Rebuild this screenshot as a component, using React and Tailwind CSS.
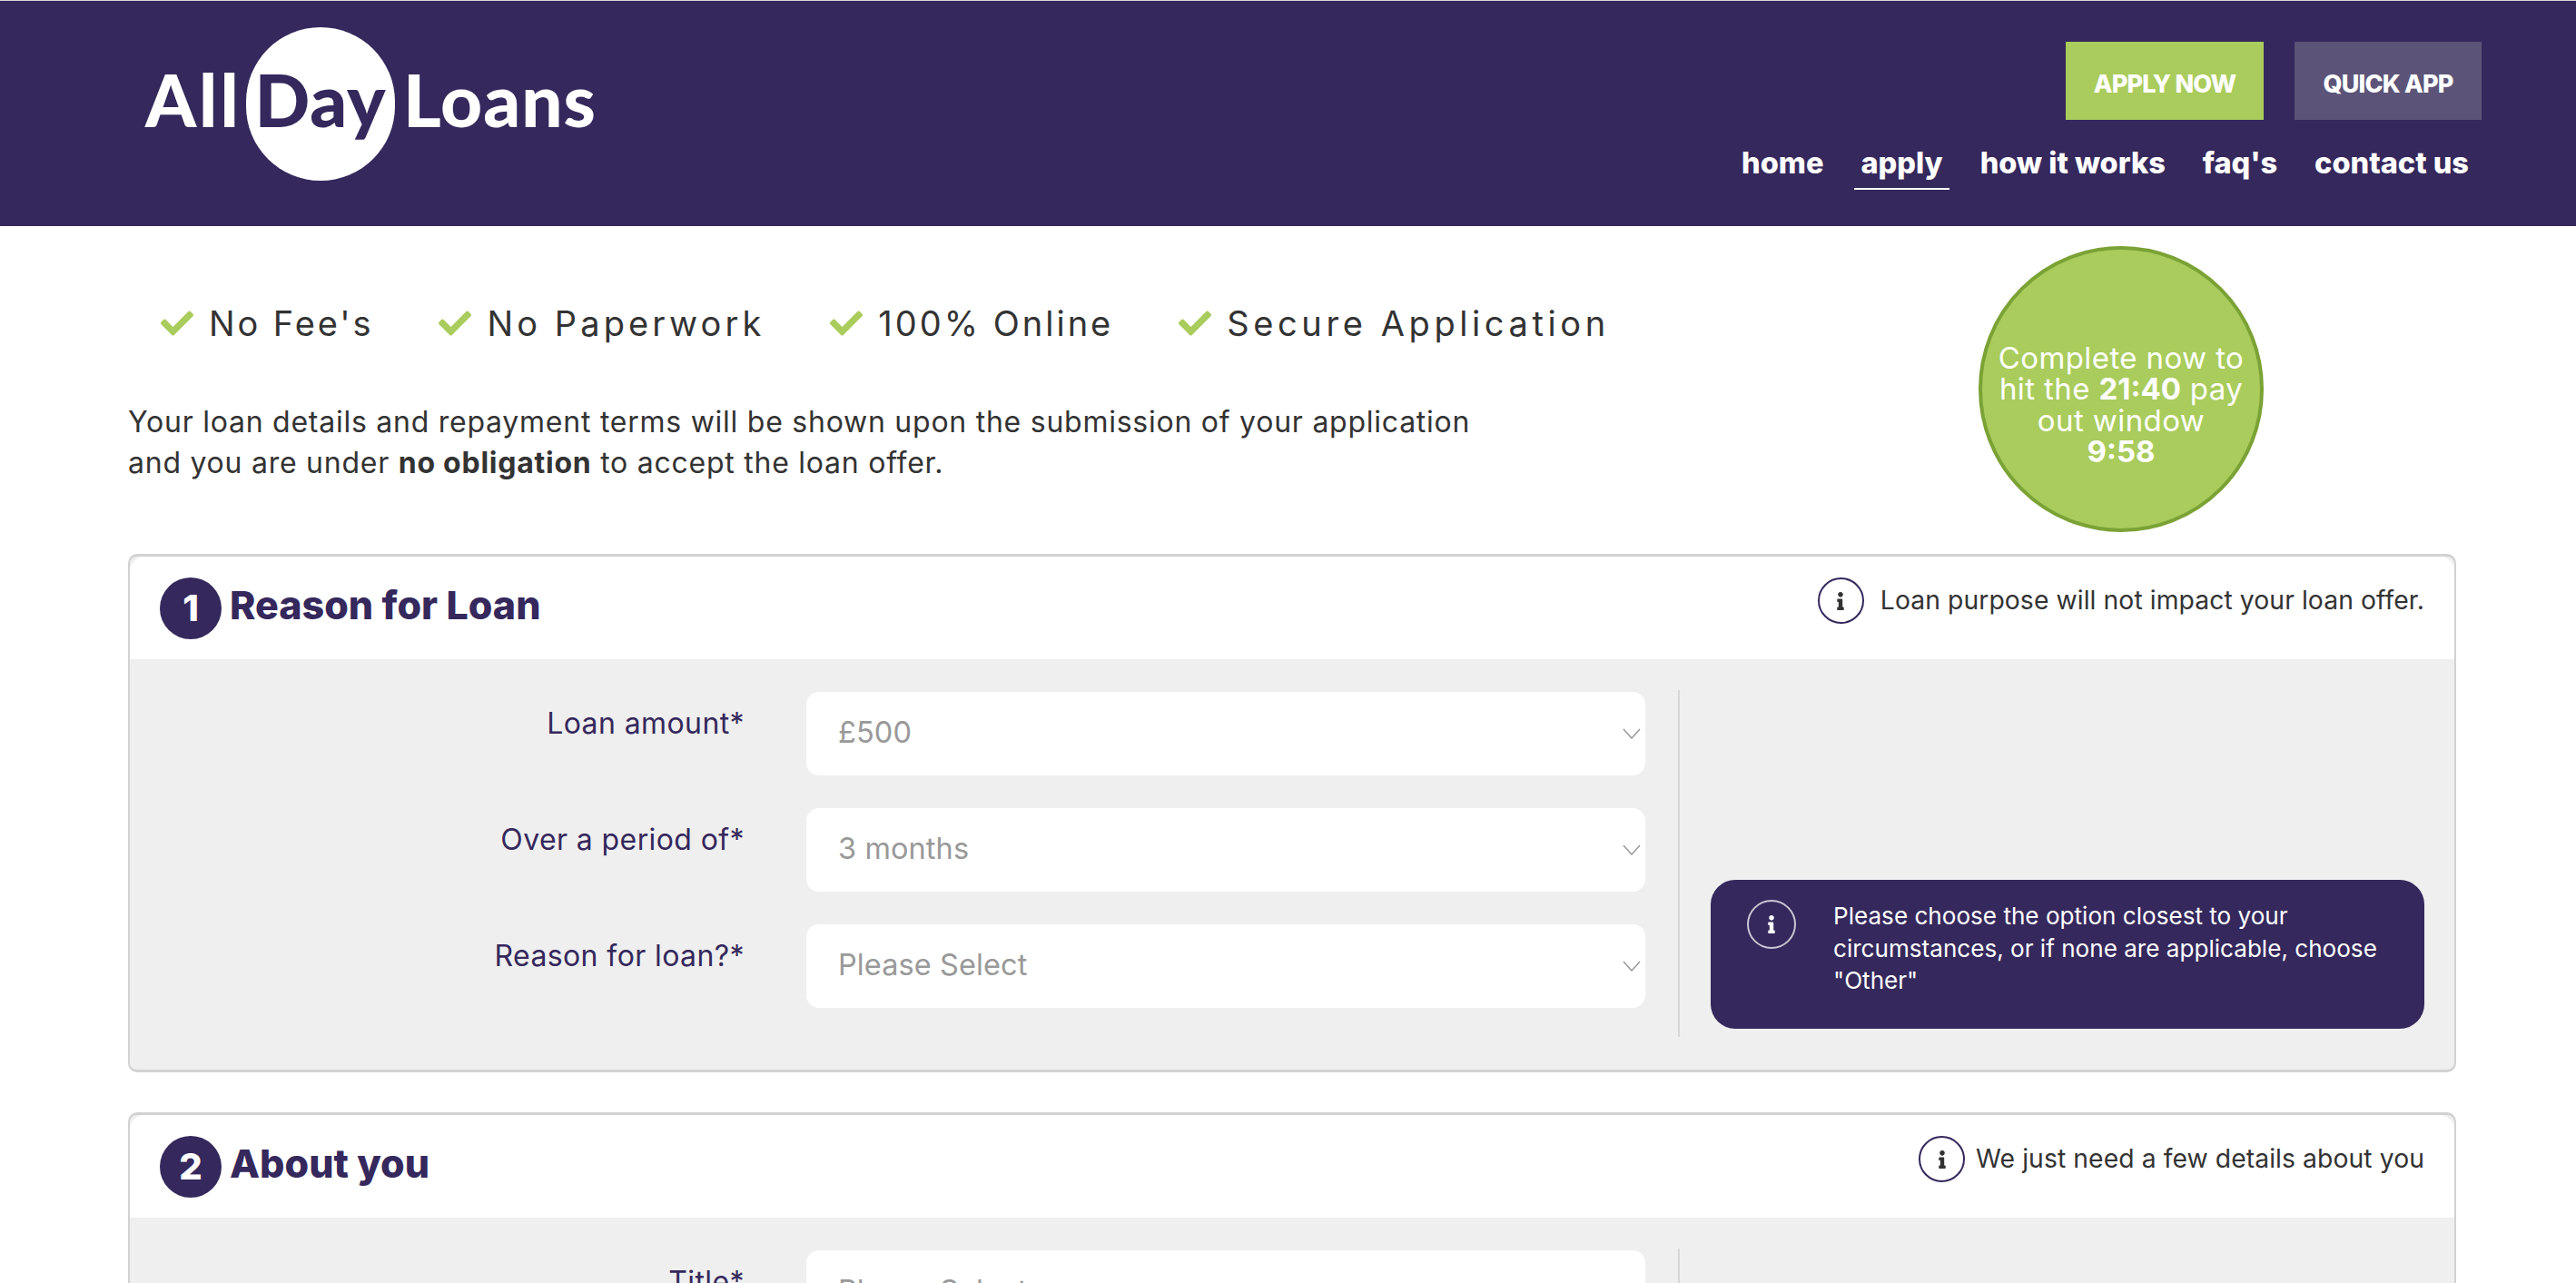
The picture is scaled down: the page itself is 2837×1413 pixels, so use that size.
import React from 'react'
import { FaCheck, FaInfo } from 'react-icons/fa'

const navLinks = [
  { label: 'home' },
  { label: 'apply', active: true },
  { label: 'how it works' },
  { label: "faq's" },
  { label: 'contact us' },
]

const perks = [
  { label: "No Fee's", tracking: 'tracking-[2.9px]' },
  { label: 'No Paperwork', tracking: 'tracking-[4.1px]' },
  { label: '100% Online', tracking: 'tracking-[3px]' },
  { label: 'Secure Application', tracking: 'tracking-[4.6px]' },
]

function Logo() {
  return (
    <div className="flex items-center font-['Lato',sans-serif] text-[80px] leading-none font-black text-white">
      <span className="mr-[9px] w-[102px] pb-[12px] tracking-[3px]">All</span>
      <div className="flex h-[169px] w-[164px] items-center justify-center rounded-full bg-white pb-[12px] tracking-[1px] text-[#35285c]">
        Day
      </div>
      <span className="ml-[9px] pb-[12px] tracking-[1px]">Loans</span>
    </div>
  )
}

function InfoIcon({ dark }) {
  return (
    <div
      className={
        dark
          ? 'flex h-[51px] w-[51px] shrink-0 items-center justify-center rounded-full border-2 border-[#35285c] text-[#333333]'
          : 'flex h-[54px] w-[54px] shrink-0 items-center justify-center rounded-full border-2 border-[#c9c6d3] text-white'
      }
    >
      <FaInfo className="h-[20px] w-[20px]" />
    </div>
  )
}

function Select({ label, value }) {
  return (
    <div className="flex gap-[68px]">
      <label className="w-[677px] pt-[17px] text-right text-[32px] leading-[36px] tracking-[0.4px] text-[#35285c]">
        {label}
      </label>
      <div className="flex h-[92px] w-[924px] items-center justify-between rounded-[14px] bg-white pr-[5px] pl-[35px] text-[32.5px] tracking-[0.1px] text-[#999999]">
        <span className="mb-[2px]">{value}</span>
        <svg width="20" height="12" viewBox="0 0 20 12" fill="none" stroke="#999999" strokeWidth="1.5">
          <path d="M1 1l9 10 9-10" />
        </svg>
      </div>
    </div>
  )
}

function Card({ number, title, note, noteGap, children }) {
  return (
    <section className="rounded-[10px] border-x-2 border-t-[3px] border-b-[3px] border-[#d2d2d2] bg-[#efefef]">
      <div className="flex h-[113px] items-center justify-between rounded-t-[16px] bg-white pr-[33px] pl-[33px]">
        <div className="flex items-center gap-[9px]">
          <div className="flex h-[68px] w-[68px] items-center justify-center rounded-full bg-[#35285c] text-[40px] font-extrabold text-white">
            {number}
          </div>
          <h2 className="pb-[7px] text-[43px] font-extrabold text-[#35285c]">{title}</h2>
        </div>
        <div className={`flex items-center pb-[16px] text-[28.3px] tracking-[0.08px] text-[#333333] ${noteGap}`}>
          <InfoIcon dark />
          <span>{note}</span>
        </div>
      </div>
      {children}
    </section>
  )
}

export default function App() {
  return (
    <div className="h-[1413px] overflow-hidden bg-white font-['Inter',sans-serif]">
      <header className="flex h-[249px] justify-between border-t border-[#d8d8d8] bg-[#35285c] pr-[104px] pl-[160px]">
        <div className="pt-[29px]">
          <Logo />
        </div>
        <div className="flex flex-col items-end pt-[45px]">
          <div className="flex gap-[34px]">
            <a className="flex h-[86px] w-[218px] items-center justify-center bg-[#a9cc5c] pt-[8px] text-[27px] font-extrabold tracking-[-0.8px] text-white">
              APPLY NOW
            </a>
            <a className="flex h-[86px] w-[206px] items-center justify-center bg-[#5c5478] pt-[8px] text-[27px] font-extrabold tracking-[-0.8px] text-white">
              QUICK APP
            </a>
          </div>
          <nav className="mt-[23px] mr-[7px] flex gap-[27px]">
            {navLinks.map((link) => (
              <a
                key={link.label}
                className={
                  link.active
                    ? 'border-b-2 border-white px-[7px] pb-[2px] text-[32.5px] leading-[50px] font-extrabold text-white'
                    : 'border-b-2 border-transparent px-[7px] pb-[2px] text-[32.5px] leading-[50px] font-extrabold text-white'
                }
              >
                {link.label}
              </a>
            ))}
          </nav>
        </div>
      </header>

      <main className="pr-[132px] pl-[141px]">
        <div className="flex justify-between pt-[22px] pb-[24px]">
          <div className="pt-[60px]">
            <ul className="flex gap-[72px] pl-[36px] text-[38px] leading-[50px] text-[#333333]">
              {perks.map((perk) => (
                <li key={perk.label} className={`flex items-center gap-[17px] ${perk.tracking}`}>
                  <FaCheck className="h-[36px] w-[36px] text-[#a9cc5c]" />
                  {perk.label}
                </li>
              ))}
            </ul>
            <p className="mt-[61px] text-[32px] leading-[45px] tracking-[0.75px] text-[#333333]">
              Your loan details and repayment terms will be shown upon the submission of your application
              <br />
              and you are under <strong className="font-bold">no obligation</strong> to accept the loan offer.
            </p>
          </div>
          <div className="mr-[212px] flex h-[315px] w-[314px] shrink-0 items-center justify-center rounded-full border-[4px] border-[#7ba235] bg-[#a9cc5c] pt-[34px] text-center text-[33px] leading-[34.5px] tracking-[0.4px] text-white">
            <div>
              Complete now to
              <br />
              hit the <strong className="font-bold tracking-normal">21:40</strong> pay
              <br />
              out window
              <br />
              <strong className="font-bold tracking-normal">9:58</strong>
            </div>
          </div>
        </div>

        <Card
          number="1"
          title="Reason for Loan"
          note="Loan purpose will not impact your loan offer."
          noteGap="gap-[18px]"
        >
          <div className="flex pt-[34px] pr-[33px] pb-[36px]">
            <div className="flex flex-col gap-[36px] pt-[2px] pb-[32px]">
              <Select label="Loan amount*" value="£500" />
              <Select label="Over a period of*" value="3 months" />
              <Select label="Reason for loan?*" value="Please Select" />
            </div>
            <div className="ml-[36px] flex flex-1 items-end border-l-2 border-[#d8d8d8] pb-[9px] pl-[34px]">
              <div className="flex h-[164px] w-full gap-[41px] rounded-[27px] bg-[#35285c] pt-[22px] pl-[40px] text-white">
                <InfoIcon />
                <p className="text-[26.1px] leading-[35.5px]">
                  Please choose the option closest to your
                  <br />
                  circumstances, or if none are applicable, choose
                  <br />
                  "Other"
                </p>
              </div>
            </div>
          </div>
        </Card>

        <div className="mt-[44px]">
          <Card
            number="2"
            title="About you"
            note="We just need a few details about you"
            noteGap="gap-[12px]"
          >
            <div className="flex pt-[34px] pr-[33px] pb-[34px]">
              <div className="flex flex-col gap-[36px] pt-[2px]">
                <Select label="Title*" value="Please Select" />
              </div>
              <div className="ml-[36px] flex-1 border-l-2 border-[#d8d8d8]"></div>
            </div>
          </Card>
        </div>
      </main>
    </div>
  )
}
